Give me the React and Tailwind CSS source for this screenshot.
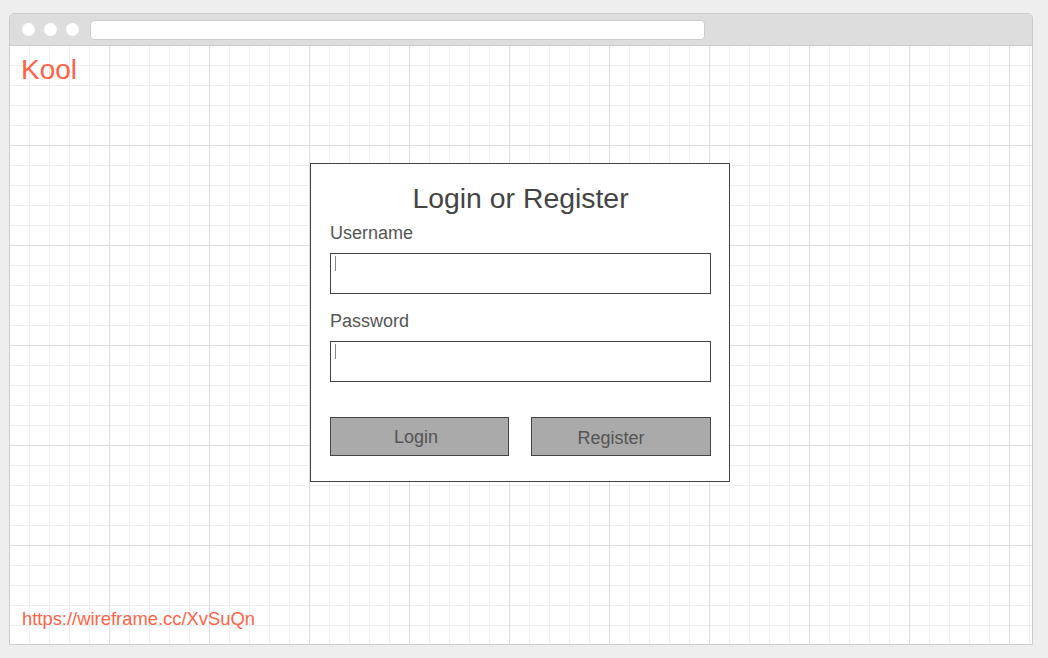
import React from 'react';

// Wireframe login page inside a fake browser window
const gridBg =
  "bg-[linear-gradient(to_right,transparent_99px,#dddddd_99px),linear-gradient(to_bottom,transparent_99px,#dddddd_99px),linear-gradient(to_right,transparent_19px,#eeeeee_19px),linear-gradient(to_bottom,transparent_19px,#eeeeee_19px)] bg-[length:100px_100px,100px_100px,20px_20px,20px_20px]";

function Field({ label, first }) {
  return (
    <div className={first ? 'mt-[9px]' : 'mt-[17px]'}>
      <div className="text-[18px] leading-[20px] text-[#555555]">{label}</div>
      <div className="mt-[10px] h-[41px] w-[381px] border border-[#444444] bg-white">
        <div className="ml-[4px] mt-[2px] h-[15px] w-px bg-[#888888]" />
      </div>
    </div>
  );
}

export default function App() {
  return (
    <div className="w-[1048px] h-[658px] bg-[#eeeeee] pt-[13px] pl-[9px] font-['Liberation_Sans',Arial,sans-serif]">
      <div className="w-[1024px] h-[632px] border border-[#cccccc] rounded-t-[5px] bg-white flex flex-col overflow-hidden">
        {/* title bar */}
        <div className="h-[32px] shrink-0 bg-[#dddddd] border-b border-[#cccccc] flex items-center pl-[12px]">
          <div className="flex gap-[9px]">
            <div className="w-[13px] h-[13px] rounded-full bg-white" />
            <div className="w-[13px] h-[13px] rounded-full bg-white" />
            <div className="w-[13px] h-[13px] rounded-full bg-white" />
          </div>
          <div className="ml-[11px] w-[615px] h-[20px] rounded-[4px] bg-white border border-[#cccccc]" />
        </div>

        {/* canvas */}
        <div className={`flex-1 flex flex-col ${gridBg}`}>
          <div className="pt-[8px] pl-[11px] text-[28px] leading-[32px] text-[#ff6347]">Kool</div>

          <div className="mt-[77px] ml-[300px] w-[420px] h-[319px] border border-[#444444] bg-white pt-[18px] pl-[19px]">
            <div className="w-[381px] text-center text-[28.4px] leading-[32px] text-[#444444]">Login or Register</div>
            <Field label="Username" first />
            <Field label="Password" />
            <div className="mt-[35px] flex gap-[22px]">
              <button className="w-[179px] h-[39px] border border-[#444444] bg-[#aaaaaa] text-[18px] leading-[20px] text-[#555555] pr-[7px]">
                Login
              </button>
              <button className="w-[180px] h-[39px] border border-[#444444] bg-[#aaaaaa] text-[18px] leading-[20px] text-[#555555] pr-[20px] pt-[2px]">
                Register
              </button>
            </div>
          </div>

          <div className="mt-auto pb-[15px] pl-[12px] text-[18.4px] leading-[20px] text-[#ff6347]">
            https://wireframe.cc/XvSuQn
          </div>
        </div>
      </div>
    </div>
  );
}
